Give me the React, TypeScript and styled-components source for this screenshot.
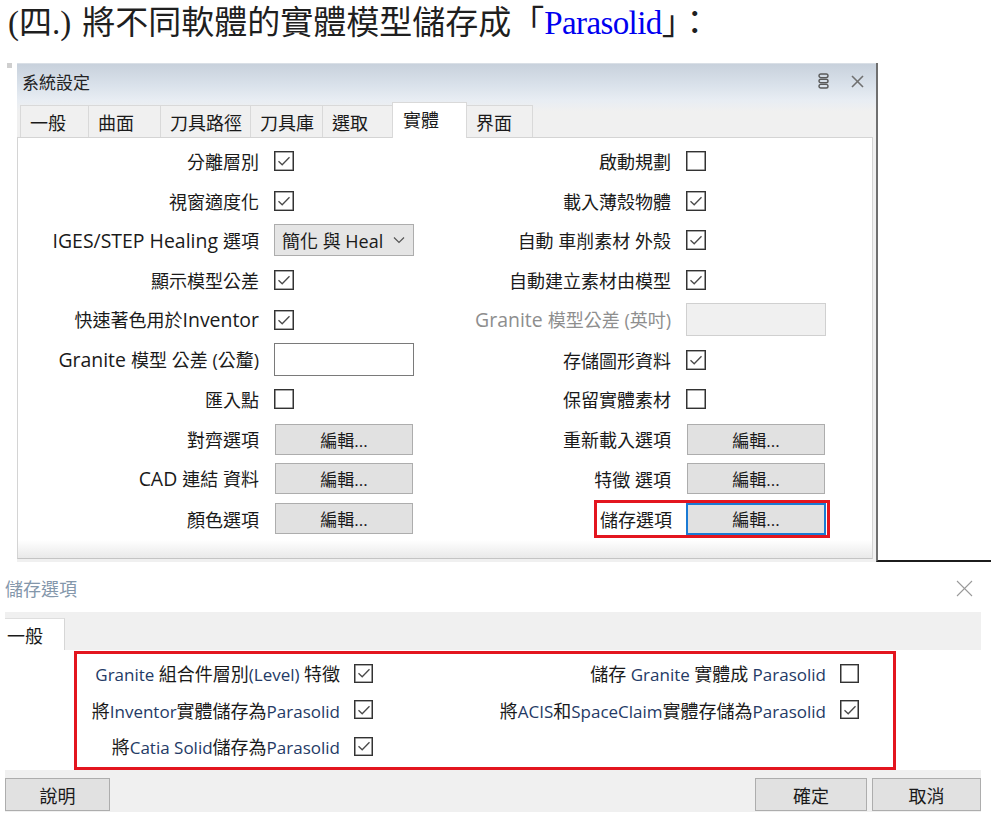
import React from "react";
import styled, { createGlobalStyle } from "styled-components";

const UI = `"Open Sans", "Noto Sans CJK TC", sans-serif`;

const Global = createGlobalStyle`
  html, body { margin: 0; padding: 0; background: #fff; }
  body { font-family: ${UI}; color: #1a1a1a; }
  * { box-sizing: border-box; }
`;

const Page = styled.div`
  width: 991px;
  height: 823px;
  overflow: hidden;
  display: flex;
  flex-direction: column;
`;

const Heading = styled.h1`
  margin: 0;
  height: 63px;
  padding: 3px 0 0 8px;
  font-family: "Liberation Serif", "Noto Sans CJK TC", serif;
  font-weight: 400;
  font-size: 33px;
  line-height: 40px;
  color: #1f1f1f;
  white-space: nowrap;
`;

const Num = styled.span`
  margin-right: 11px;
`;

const Blue = styled.span`
  color: #0000f0;
  font-family: "Liberation Serif", serif;
  letter-spacing: -0.6px;
`;

const TopArea = styled.div`
  display: flex;
  height: 499px;
`;

const Gutter = styled.div`
  width: 17px;
  padding: 0 0 0 7px;
`;

const Dot = styled.div`
  width: 5px;
  height: 5px;
  background: #cfcfcf;
`;

const Window = styled.div`
  width: 859px;
  display: flex;
  flex-direction: column;
  background: #f0f0f0;
  padding-bottom: 3px;
`;

const TitleBar = styled.div`
  height: 37px;
  display: flex;
  align-items: center;
  padding: 0 12px 2px 5px;
  background: linear-gradient(to bottom, #c8d1dc 0%, #dae2eb 60%, #e8edf3 100%);
  border-top: 1px solid #d9dfe6;
  font-size: 17px;
  color: #222;
`;

const WinTitle = styled.div`
  flex: 1;
`;

const TitleIcons = styled.div`
  display: flex;
  align-items: center;
  gap: 22px;
`;

const TabStrip = styled.div`
  height: 37px;
  display: flex;
  align-items: flex-end;
  padding-left: 4px;
  background: linear-gradient(to bottom, #e8edf3 0%, #f0f0f0 30%);
`;

const Tab = styled.div<{ $active?: boolean; $w: number }>`
  position: relative;
  z-index: ${(p) => (p.$active ? 2 : 1)};
  width: ${(p) => p.$w}px;
  height: ${(p) => (p.$active ? 36 : 32)}px;
  margin-left: -1px;
  margin-bottom: ${(p) => (p.$active ? -1 : 0)}px;
  border: 1px solid #d9d9d9;
  border-bottom: none;
  background: ${(p) => (p.$active ? "#ffffff" : "#f0f0f0")};
  display: flex;
  align-items: center;
  padding: ${(p) => (p.$active ? "0 0 3px 10px" : "0 0 0 9px")};
  font-size: 18px;
  color: #1a1a1a;
  white-space: nowrap;
`;

const Panel = styled.div`
  flex: 1;
  margin-right: 3px;
  border: 1px solid #d4d4d4;
  border-bottom-color: #c4c4c4;
  background: linear-gradient(to bottom, #ffffff calc(100% - 18px), #e9e9e9 100%);
  display: flex;
  gap: 16px;
  padding-top: 3px;
`;

const Column = styled.div`
  width: 396px;
  display: flex;
  flex-direction: column;
`;

const Row = styled.div`
  height: 39.75px;
  display: flex;
  align-items: center;
  justify-content: flex-end;
  gap: 15px;
  font-size: 18px;
`;

const Label = styled.span<{ $muted?: boolean }>`
  white-space: nowrap;
  color: ${(p) => (p.$muted ? "#8e8e8e" : "#1a1a1a")};
`;

const TopLatin = styled.span`
  font-size: 1.08em;
`;

const Slot = styled.div`
  width: 140px;
  height: 100%;
  display: flex;
  align-items: center;
`;

const Box = styled.div<{ $size: number }>`
  width: ${(p) => p.$size}px;
  height: ${(p) => p.$size}px;
  border: 1px solid #333;
  box-shadow: inset 0 0 0 0.6px #555;
  background: #fff;
  display: flex;
  align-items: center;
  justify-content: center;
`;

const SelectBox = styled.div`
  width: 140px;
  height: 32px;
  border: 1px solid #adadad;
  background: #e5e5e5;
  display: flex;
  align-items: center;
  justify-content: space-between;
  padding: 0 8px 0 7px;
  font-size: 18px;
  color: #1a1a1a;
`;

const TextField = styled.div<{ $disabled?: boolean }>`
  width: 140px;
  height: 33px;
  border: 1px solid ${(p) => (p.$disabled ? "#d0d0d0" : "#7a7a7a")};
  background: ${(p) => (p.$disabled ? "#f0f0f0" : "#ffffff")};
`;

const EditButton = styled.div<{ $focus?: boolean }>`
  width: ${(p) => (p.$focus ? 140 : 138)}px;
  height: ${(p) => (p.$focus ? 32 : 31)}px;
  margin-left: ${(p) => (p.$focus ? 0 : 1)}px;
  border: ${(p) => (p.$focus ? "2px solid #1a7ad4" : "1px solid #adadad")};
  background: #e1e1e1;
  display: flex;
  align-items: center;
  justify-content: center;
  font-size: 17px;
  color: #1a1a1a;
`;

const Highlight = styled.div`
  height: 38px;
  margin-right: -4px;
  display: flex;
  align-items: center;
  gap: 14px;
  padding: 0 1px 0 3px;
  border: 3px solid #e3151f;
`;

const Backdrop = styled.div`
  flex: 1;
  border-left: 2px solid #6f6f6f;
  border-bottom: 2px solid #1c1c1c;
`;

/* second dialog */
const Dialog = styled.div`
  margin-left: 5px;
  width: 976px;
  display: flex;
  flex-direction: column;
`;

const DlgHeader = styled.div`
  height: 50px;
  display: flex;
  align-items: center;
  justify-content: space-between;
  padding: 2px 8px 0 0;
`;

const DlgTitle = styled.div`
  font-size: 18px;
  color: #8497ab;
`;

const DlgTabs = styled.div`
  height: 38px;
  background: #f0f0f0;
  display: flex;
  align-items: flex-end;
`;

const DlgTab = styled.div`
  width: 60px;
  height: 32px;
  background: #fff;
  border-top: 1px solid #dedede;
  border-right: 1px solid #d6d6d6;
  display: flex;
  align-items: center;
  padding-left: 2px;
  font-size: 18px;
  color: #1a1a1a;
`;

const DlgBody = styled.div`
  height: 120px;
  background: #fff;
  padding: 1px 0 0 69px;
`;

const RedBox = styled.div`
  width: 822px;
  height: 119px;
  border: 3px solid #e3151f;
  display: grid;
  grid-template-columns: 296px 1fr;
  grid-auto-rows: 36.5px;
  padding: 1px 34px 0 0;
`;

const OptRow = styled.div`
  display: flex;
  align-items: center;
  justify-content: flex-end;
  gap: 14px;
  font-size: 18px;
  color: #1a1a1a;
  white-space: nowrap;
`;

const OptLatin = styled.span`
  font-size: 17px;
  color: #243a66;
`;

const Footer = styled.div`
  height: 42px;
  background: #f0f0f0;
  display: flex;
  align-items: flex-end;
  padding-bottom: 1px;
`;

const FootButton = styled.div<{ $w: number }>`
  width: ${(p) => p.$w}px;
  height: 33px;
  background: #e1e1e1;
  border: 1px solid #adadad;
  display: flex;
  align-items: center;
  justify-content: center;
  font-size: 18px;
  color: #1a1a1a;
`;

const Spacer = styled.div`
  flex: 1;
`;

const Gap = styled.div<{ $w: number }>`
  width: ${(p) => p.$w}px;
`;

/* icons */
const Check = () => (
  <svg width="14" height="14" viewBox="0 0 14 14">
    <polyline points="1.5,7.2 5.2,10.8 12.5,3.2" fill="none" stroke="#4a4a4a" strokeWidth="1.3" />
  </svg>
);

const CheckBox = ({ checked, size = 20 }: { checked?: boolean; size?: number }) => (
  <Box $size={size}>{checked ? <Check /> : null}</Box>
);

const Chevron = () => (
  <svg width="12" height="8" viewBox="0 0 12 8">
    <polyline points="1,1.5 6,6.5 11,1.5" fill="none" stroke="#555" strokeWidth="1.2" />
  </svg>
);

const StackIcon = () => (
  <svg width="11" height="16" viewBox="0 0 11 16">
    <rect x="1" y="1" width="9" height="3.6" rx="1.8" fill="none" stroke="#5a5a5a" strokeWidth="1.4" />
    <rect x="1" y="6.2" width="9" height="3.6" rx="1.8" fill="none" stroke="#5a5a5a" strokeWidth="1.4" />
    <rect x="1" y="11.4" width="9" height="3.6" rx="1.8" fill="none" stroke="#5a5a5a" strokeWidth="1.4" />
  </svg>
);

const CloseX = ({ size, color, w }: { size: number; color: string; w: number }) => (
  <svg width={size} height={size} viewBox={`0 0 ${size} ${size}`}>
    <line x1="1" y1="1" x2={size - 1} y2={size - 1} stroke={color} strokeWidth={w} />
    <line x1={size - 1} y1="1" x2="1" y2={size - 1} stroke={color} strokeWidth={w} />
  </svg>
);

/* splits text into ASCII runs and CJK runs; ASCII runs are wrapped in the given component */
const Mixed = ({ text, as: L }: { text: string; as: React.ComponentType<{ children?: React.ReactNode }> }) => {
  const parts = text.split(/([\x00-\x7F]+)/g).filter((s) => s !== "");
  return (
    <>
      {parts.map((p, i) =>
        /^[\x00-\x7F]+$/.test(p) && /[A-Za-z]/.test(p) ? <L key={i}>{p}</L> : <span key={i}>{p}</span>
      )}
    </>
  );
};

type Ctl =
  | { kind: "check"; on: boolean }
  | { kind: "select"; value: string }
  | { kind: "input"; disabled?: boolean }
  | { kind: "button"; focus?: boolean };

interface Item {
  label: string;
  muted?: boolean;
  ctl: Ctl;
  mark?: boolean;
}

const leftItems: Item[] = [
  { label: "分離層別", ctl: { kind: "check", on: true } },
  { label: "視窗適度化", ctl: { kind: "check", on: true } },
  { label: "IGES/STEP Healing 選項", ctl: { kind: "select", value: "簡化 與 Heal" } },
  { label: "顯示模型公差", ctl: { kind: "check", on: true } },
  { label: "快速著色用於Inventor", ctl: { kind: "check", on: true } },
  { label: "Granite 模型 公差 (公釐)", ctl: { kind: "input" } },
  { label: "匯入點", ctl: { kind: "check", on: false } },
  { label: "對齊選項", ctl: { kind: "button" } },
  { label: "CAD 連結 資料", ctl: { kind: "button" } },
  { label: "顏色選項", ctl: { kind: "button" } },
];

const rightItems: Item[] = [
  { label: "啟動規劃", ctl: { kind: "check", on: false } },
  { label: "載入薄殼物體", ctl: { kind: "check", on: true } },
  { label: "自動 車削素材 外殼", ctl: { kind: "check", on: true } },
  { label: "自動建立素材由模型", ctl: { kind: "check", on: true } },
  { label: "Granite 模型公差 (英吋)", muted: true, ctl: { kind: "input", disabled: true } },
  { label: "存儲圖形資料", ctl: { kind: "check", on: true } },
  { label: "保留實體素材", ctl: { kind: "check", on: false } },
  { label: "重新載入選項", ctl: { kind: "button" } },
  { label: "特徵 選項", ctl: { kind: "button" } },
  { label: "儲存選項", ctl: { kind: "button", focus: true }, mark: true },
];

const renderCtl = (c: Ctl) => {
  switch (c.kind) {
    case "check":
      return <CheckBox checked={c.on} />;
    case "select":
      return (
        <SelectBox>
          <span>{c.value}</span>
          <Chevron />
        </SelectBox>
      );
    case "input":
      return <TextField $disabled={c.disabled} />;
    case "button":
      return <EditButton $focus={c.focus}>編輯...</EditButton>;
  }
};

const SettingRow = ({ item }: { item: Item }) => {
  const label = (
    <Label $muted={item.muted}>
      <Mixed text={item.label} as={TopLatin} />
    </Label>
  );
  if (item.mark) {
    return (
      <Row>
        <Highlight>
          {label}
          {renderCtl(item.ctl)}
        </Highlight>
      </Row>
    );
  }
  return (
    <Row>
      {label}
      <Slot>{renderCtl(item.ctl)}</Slot>
    </Row>
  );
};

const tabs: { name: string; w: number; active?: boolean }[] = [
  { name: "一般", w: 69 },
  { name: "曲面", w: 73 },
  { name: "刀具路徑", w: 91 },
  { name: "刀具庫", w: 73 },
  { name: "選取", w: 71 },
  { name: "實體", w: 75, active: true },
  { name: "界面", w: 67 },
];

const opts: { label: string; on: boolean }[] = [
  { label: "Granite 組合件層別(Level) 特徵", on: true },
  { label: "儲存 Granite 實體成 Parasolid", on: false },
  { label: "將Inventor實體儲存為Parasolid", on: true },
  { label: "將ACIS和SpaceClaim實體存儲為Parasolid", on: true },
  { label: "將Catia Solid儲存為Parasolid", on: true },
];

export default function App() {
  return (
    <Page>
      <Global />
      <Heading>
        <Num>(四.)</Num>將不同軟體的實體模型儲存成「<Blue>Parasolid</Blue>」：
      </Heading>
      <TopArea>
        <Gutter>
          <Dot />
        </Gutter>
        <Window>
          <TitleBar>
            <WinTitle>系統設定</WinTitle>
            <TitleIcons>
              <StackIcon />
              <CloseX size={13} color="#707070" w={1.6} />
            </TitleIcons>
          </TitleBar>
          <TabStrip>
            {tabs.map((t) => (
              <Tab key={t.name} $w={t.w} $active={t.active}>
                {t.name}
              </Tab>
            ))}
          </TabStrip>
          <Panel>
            <Column>
              {leftItems.map((it) => (
                <SettingRow key={it.label} item={it} />
              ))}
            </Column>
            <Column>
              {rightItems.map((it) => (
                <SettingRow key={it.label} item={it} />
              ))}
            </Column>
          </Panel>
        </Window>
        <Backdrop />
      </TopArea>
      <Dialog>
        <DlgHeader>
          <DlgTitle>儲存選項</DlgTitle>
          <CloseX size={17} color="#9a9a9a" w={1.1} />
        </DlgHeader>
        <DlgTabs>
          <DlgTab>一般</DlgTab>
        </DlgTabs>
        <DlgBody>
          <RedBox>
            {opts.map((o) => (
              <OptRow key={o.label}>
                <span>
                  <Mixed text={o.label} as={OptLatin} />
                </span>
                <CheckBox checked={o.on} size={19} />
              </OptRow>
            ))}
          </RedBox>
        </DlgBody>
        <Footer>
          <FootButton $w={105}>說明</FootButton>
          <Spacer />
          <FootButton $w={112}>確定</FootButton>
          <Gap $w={5} />
          <FootButton $w={109}>取消</FootButton>
        </Footer>
      </Dialog>
    </Page>
  );
}
